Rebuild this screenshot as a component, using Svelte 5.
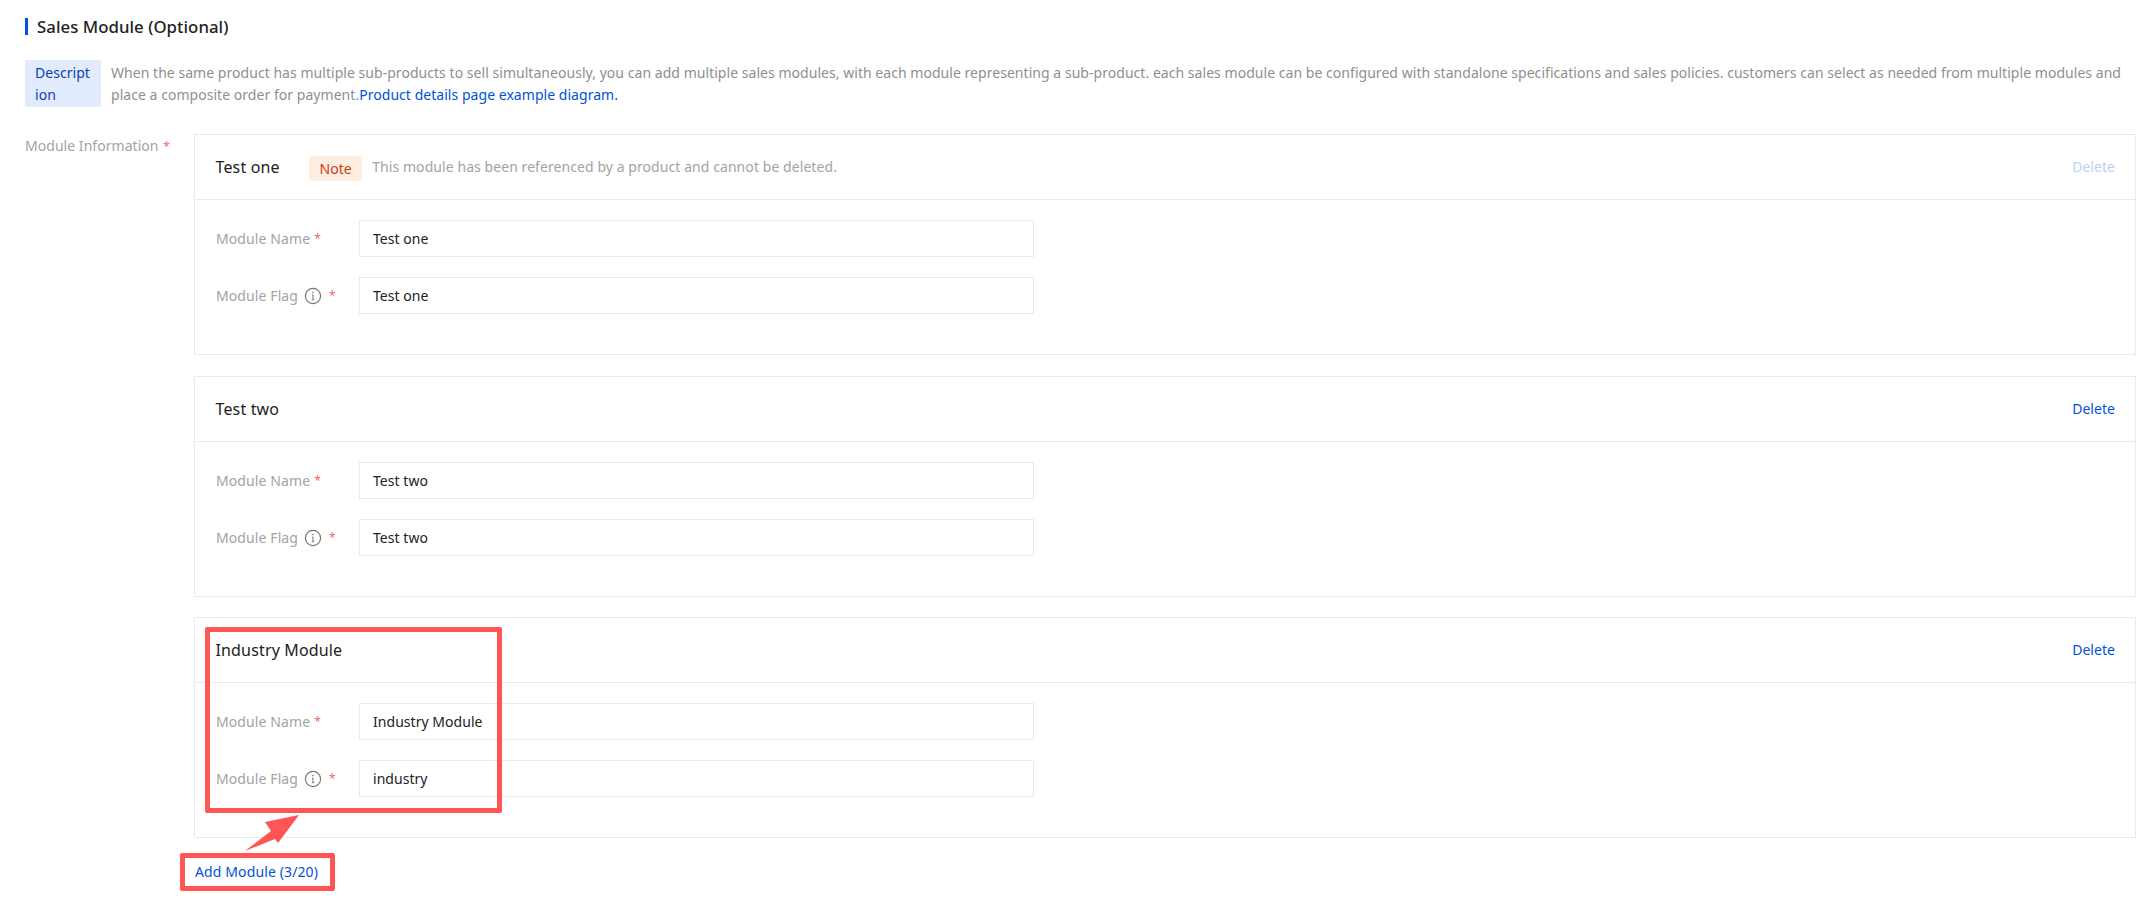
<script>
  const modules = [
    { title: 'Test one', name: 'Test one', flag: 'Test one', locked: true },
    { title: 'Test two', name: 'Test two', flag: 'Test two', locked: false },
    { title: 'Industry Module', name: 'Industry Module', flag: 'industry', locked: false }
  ];
</script>

<div class="page">
  <h2 class="section-title">Sales Module (Optional)</h2>

  <div class="notice">
    <span class="notice-tag">Description</span>
    <p class="notice-text">When the same product has multiple sub-products to sell simultaneously, you can add multiple sales modules, with each module representing a sub-product. each sales module can be configured with standalone specifications and sales policies. customers can select as needed from multiple modules and place a composite order for payment.<a href="#top">Product details page example diagram.</a></p>
  </div>

  <div class="form-row">
    <div class="form-label">Module Information <span class="req">*</span></div>
    <div class="module-list">
      {#each modules as m}
        <section class="card">
          <header class="card-head">
            <div class="head-left">
              <span class="card-title">{m.title}</span>
              {#if m.locked}
                <span class="note">Note</span>
                <span class="hint">This module has been referenced by a product and cannot be deleted.</span>
              {/if}
            </div>
            <button class="link" class:disabled={m.locked}>Delete</button>
          </header>
          <div class="card-body">
            <div class="field">
              <div class="field-label">Module Name <span class="req tight">*</span></div>
              <div class="input">{m.name}</div>
            </div>
            <div class="field">
              <div class="field-label">
                Module Flag
                <svg class="info" width="18" height="18" viewBox="0 0 18 18" fill="none" stroke="#777" stroke-width="1.2">
                  <circle cx="9" cy="9" r="7.6" />
                  <path d="M9 8v4.6M7.8 12.6h2.4M8 8h1" stroke-width="1" />
                  <circle cx="9" cy="5.6" r="0.8" fill="#777" stroke="none" />
                </svg>
                <span class="req">*</span>
              </div>
              <div class="input">{m.flag}</div>
            </div>
          </div>
        </section>
      {/each}
      <button class="link add">Add Module (3/20)</button>
    </div>
  </div>

  <div class="mark mark-card"></div>
  <div class="mark mark-add"></div>
  <svg class="arrow" width="60" height="40" viewBox="0 0 60 40">
    <path d="M55 1 L21 8 L27 17 L1 37 L31 25 L34 29 Z" fill="#ff5555" />
  </svg>
</div>

<style>
  :global(body) {
    margin: 0;
    background: #fff;
  }
  .page {
    position: relative;
    box-sizing: border-box;
    width: 2155px;
    height: 899px;
    padding: 16px 19px 0 25px;
    font-family: "Noto Sans", "Noto Sans CJK SC", sans-serif;
    font-size: 14px;
    line-height: 22px;
    letter-spacing: 0.04px;
    color: #000;
  }
  .section-title {
    margin: 0 0 22px;
    padding-left: 12px;
    height: 22px;
    font-size: 16.8px;
    font-weight: 500;
    line-height: 22px;
    color: #222;
    position: relative;
  }
  .section-title::before {
    content: "";
    position: absolute;
    left: 0;
    top: 2px;
    width: 3px;
    height: 17px;
    background: #0052d9;
  }
  .notice {
    display: flex;
    gap: 10px;
    margin-bottom: 27px;
  }
  .notice-tag {
    flex: none;
    box-sizing: border-box;
    width: 76px;
    height: 47px;
    padding: 2px 10px 0;
    border-radius: 2px;
    background: #e2eafd;
    color: #0b3fb5;
    word-break: break-all;
  }
  .notice-text {
    margin: 2px 0 0;
    color: #8f8f8f;
    flex: 1;
  }
  .notice-text a {
    color: #0052d9;
    text-decoration: none;
  }
  .form-row {
    display: flex;
  }
  .form-label {
    flex: none;
    width: 169px;
    color: #a3a3a3;
    line-height: 24px;
  }
  .req {
    color: #f06a6a;
    font-size: 12px;
    margin-left: 1px;
  }
  .req.tight {
    margin-left: -2px;
  }
  .module-list {
    flex: 1;
    display: flex;
    flex-direction: column;
    gap: 20.5px;
    align-items: stretch;
  }
  .card {
    box-sizing: border-box;
    height: 221px;
    border: 1px solid #e7eaf0;
  }
  .card-head {
    box-sizing: border-box;
    height: 65px;
    padding: 0 20px;
    border-bottom: 1px solid #e7eaf0;
    display: flex;
    align-items: center;
    justify-content: space-between;
  }
  .head-left {
    display: flex;
    align-items: center;
  }
  .card-title {
    font-size: 16px;
    letter-spacing: 0.15px;
    color: #222;
    margin-right: 29.5px;
    padding-left: 0.5px;
  }
  .note {
    box-sizing: border-box;
    width: 53px;
    height: 25px;
    line-height: 25px;
    text-align: center;
    margin-top: 3px;
    margin-right: 10px;
    background: #feeee2;
    color: #c8400f;
    border-radius: 2px;
  }
  .hint {
    color: #a3a3a3;
    letter-spacing: 0.07px;
  }
  .link {
    padding: 0;
    border: 0;
    background: none;
    font: inherit;
    letter-spacing: inherit;
    color: #0052d9;
    cursor: pointer;
  }
  .link.disabled {
    color: #bcd0fb;
  }
  .card-body {
    padding: 20px 20px 0;
    display: flex;
    flex-direction: column;
    gap: 20px;
  }
  .field {
    display: flex;
    align-items: center;
  }
  .field-label {
    flex: none;
    box-sizing: border-box;
    width: 144px;
    padding: 1px 0 0 1px;
    color: #a3a3a3;
    display: flex;
    align-items: center;
    gap: 6px;
    letter-spacing: 0.1px;
  }
  .input {
    box-sizing: border-box;
    width: 675px;
    height: 37px;
    padding: 0 13px;
    border: 1px solid #e7eaf0;
    line-height: 35px;
    color: #222;
  }
  .info {
    flex: none;
  }
  .add {
    align-self: flex-start;
    margin-top: 2px;
    margin-left: 1px;
    letter-spacing: 0.12px;
  }
  .mark {
    position: absolute;
    box-sizing: border-box;
    border: 5px solid #ff5555;
    border-radius: 2px;
  }
  .mark-card {
    left: 205px;
    top: 627px;
    width: 297px;
    height: 186px;
  }
  .mark-add {
    left: 180px;
    top: 853px;
    width: 155px;
    height: 38px;
  }
  .arrow {
    position: absolute;
    left: 244px;
    top: 814px;
  }
</style>
